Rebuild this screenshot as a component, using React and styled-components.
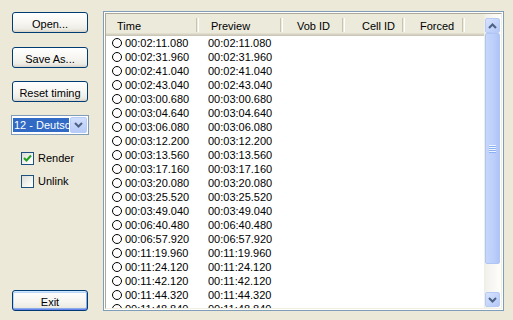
import React from "react"
import styled, { createGlobalStyle } from "styled-components"

const GlobalStyle = createGlobalStyle`
  html, body {
    margin: 0;
    padding: 0;
  }
  body {
    background: #ece9d8;
    font-family: "Liberation Sans", Arial, sans-serif;
    font-size: 11px;
    color: #000;
  }
`

const Window = styled.div`
  width: 513px;
  height: 320px;
  box-sizing: border-box;
  padding: 11px 9px 9px 11px;
  display: flex;
  gap: 14px;
  background: #ece9d8;
  overflow: hidden;
`

const Side = styled.div`
  width: 78px;
  display: flex;
  flex-direction: column;
`

const Button = styled.button`
  box-sizing: border-box;
  width: 76px;
  height: 21px;
  margin: ${p => p.$top || 0}px 0 0 1px;
  padding: 2px 0 0;
  font-family: inherit;
  font-size: 11px;
  color: #000;
  border: 1px solid #003c74;
  border-radius: 3px;
  background: linear-gradient(
    to bottom,
    #ffffff 0%,
    #f6f5f0 55%,
    #ecebe4 85%,
    #d8d2c6 100%
  );
  box-shadow: ${p =>
    p.$default
      ? "inset 0 1px 0 #cee7ff, inset 0 -1px 0 #6982ee, inset 1px 0 0 #bcd4f6, inset -1px 0 0 #89ade4, inset 0 2px 0 #bcd4f6, inset 0 -2px 0 #89ade4"
      : "none"};
  ${p => p.$default && "margin-top: auto;"}
`

const Combo = styled.div`
  box-sizing: border-box;
  width: 78px;
  height: 20px;
  margin-top: 13px;
  border: 1px solid #7f9db9;
  background: #fff;
  display: flex;
`

const ComboValue = styled.div`
  flex: 1;
  margin: 2px 1px 2px 1px;
  padding-left: 1px;
  background: #316ac5;
  color: #fff;
  line-height: 14px;
  white-space: nowrap;
  overflow: hidden;
`

const ComboButton = styled.div`
  box-sizing: border-box;
  width: 17px;
  margin: 1px 1px 1px 0;
  border: 1px solid #b9cbf7;
  border-radius: 2px;
  background: linear-gradient(to bottom, #d0defc, #b6cbf8);
  display: flex;
  align-items: center;
  justify-content: center;
`

const CheckRow = styled.label`
  display: flex;
  align-items: center;
  gap: 4px;
  height: 13px;
  margin-top: ${p => p.$top}px;
  padding-left: 10px;
  line-height: 13px;
`

const CheckBox = styled.span`
  box-sizing: border-box;
  width: 13px;
  height: 13px;
  border: 1px solid #1c5180;
  background: linear-gradient(135deg, #dcdcd7 0%, #f4f4f0 60%, #ffffff 100%);
  display: flex;
  align-items: center;
  justify-content: center;
`

const ListFrame = styled.div`
  flex: 1;
  box-sizing: border-box;
  border: 1px solid #7f9db9;
  padding: 1px;
  background: #fff;
  display: flex;
`

const ListInner = styled.div`
  flex: 1;
  border: 1px solid;
  border-color: #aca899 #f1efe2 #f1efe2 #aca899;
  display: flex;
  min-width: 0;
`

const Columns = styled.div`
  flex: 1;
  overflow: hidden;
  display: flex;
  flex-direction: column;
`

const Header = styled.div`
  height: 22px;
  flex-shrink: 0;
  box-sizing: border-box;
  padding-top: 2px;
  display: flex;
  background: linear-gradient(
    to bottom,
    #ebeadb 0,
    #ebeadb 19px,
    #e2decd 19px,
    #e2decd 20px,
    #d6d2c2 20px,
    #d6d2c2 21px,
    #cbc7b8 21px
  );
`

const HeadCell = styled.div`
  width: ${p => p.$w}px;
  flex-shrink: 0;
  display: flex;
  align-items: center;
`

const HeadLabel = styled.span`
  flex: 1;
  padding-left: ${p => p.$pad}px;
  white-space: nowrap;
`

const HeadSep = styled.span`
  width: 1px;
  height: 14px;
  margin-top: -2px;
  border-left: 1px solid #c7c5b2;
  border-right: 1px solid #fff;
`

const Row = styled.div`
  height: 14px;
  flex-shrink: 0;
  display: flex;
  line-height: 14px;
`

const Cell = styled.div`
  width: ${p => p.$w}px;
  flex-shrink: 0;
  box-sizing: border-box;
  padding-left: ${p => p.$pad}px;
  display: flex;
  align-items: center;
  gap: 2px;
  white-space: nowrap;
`

const Radio = styled.span`
  box-sizing: border-box;
  width: 10px;
  height: 10px;
  border: 1px solid #000;
  border-radius: 50%;
`

const ScrollBar = styled.div`
  width: 17px;
  flex-shrink: 0;
  display: flex;
  flex-direction: column;
  background: linear-gradient(to right, #eeede5 0, #f3f1ec 2px, #fefefb 100%);
`

const ScrollButton = styled.div`
  box-sizing: border-box;
  height: 15px;
  margin: ${p => (p.$up ? "4px 1px 0" : "0 1px 1px")};
  border: 1px solid #b7cbf6;
  border-radius: 2px;
  background: linear-gradient(135deg, #d7e3fd, #b4c8f7);
  display: flex;
  align-items: center;
  justify-content: center;
`

const Thumb = styled.div`
  box-sizing: border-box;
  height: ${p => p.$h}px;
  margin: 0 1px;
  border: 1px solid #b1c5f3;
  border-radius: 2px;
  background: linear-gradient(to right, #c6d6fc, #bccefa 60%, #b0c4f6);
  display: flex;
  flex-direction: column;
  align-items: center;
  justify-content: center;
`

const Grip = styled.span`
  width: 7px;
  height: 1px;
  margin: 0.5px 0;
  background: #eef4fe;
  box-shadow: 0 1px 0 #8cb0f8;
`

const Track = styled.div`
  flex: 1;
`

const Chevron = ({ up }) => (
  <svg width="9" height="6" viewBox="0 0 9 6">
    <path
      d={up ? "M1 5 L4.5 1.5 L8 5" : "M1 1 L4.5 4.5 L8 1"}
      fill="none"
      stroke="#4d6185"
      strokeWidth="2"
    />
  </svg>
)

const Check = () => (
  <svg width="9" height="9" viewBox="0 0 9 9">
    <path d="M1 4 L3.5 6.5 L8 1.5" fill="none" stroke="#21a121" strokeWidth="2" />
  </svg>
)

const columns = [
  { label: "Time", w: 93, pad: 11 },
  { label: "Preview", w: 84, pad: 12 },
  { label: "Vob ID", w: 62, pad: 14 },
  { label: "Cell ID", w: 60, pad: 17 },
  { label: "Forced", w: 60, pad: 15 },
]

const times = [
  "00:02:11.080",
  "00:02:31.960",
  "00:02:41.040",
  "00:02:43.040",
  "00:03:00.680",
  "00:03:04.640",
  "00:03:06.080",
  "00:03:12.200",
  "00:03:13.560",
  "00:03:17.160",
  "00:03:20.080",
  "00:03:25.520",
  "00:03:49.040",
  "00:06:40.480",
  "00:06:57.920",
  "00:11:19.960",
  "00:11:24.120",
  "00:11:42.120",
  "00:11:44.320",
  "00:11:48.840",
]

const App = () => (
  <>
    <GlobalStyle />
    <Window>
      <Side>
        <Button $top={1}>Open...</Button>
        <Button $top={14}>Save As...</Button>
        <Button $top={13}>Reset timing</Button>
        <Combo>
          <ComboValue>12 - Deutsch</ComboValue>
          <ComboButton>
            <Chevron />
          </ComboButton>
        </Combo>
        <CheckRow $top={17}>
          <CheckBox>
            <Check />
          </CheckBox>
          Render
        </CheckRow>
        <CheckRow $top={10}>
          <CheckBox />
          Unlink
        </CheckRow>
        <Button $default>Exit</Button>
      </Side>

      <ListFrame>
        <ListInner>
          <Columns>
            <Header>
              {columns.map(c => (
                <HeadCell key={c.label} $w={c.w}>
                  <HeadLabel $pad={c.pad}>{c.label}</HeadLabel>
                  <HeadSep />
                </HeadCell>
              ))}
            </Header>
            {times.map(t => (
              <Row key={t}>
                <Cell $w={93} $pad={6}>
                  <Radio />
                  <span style={{ marginLeft: 1 }}>{t}</span>
                </Cell>
                <Cell $w={84} $pad={9}>
                  {t}
                </Cell>
              </Row>
            ))}
          </Columns>
          <ScrollBar>
            <ScrollButton $up>
              <Chevron up />
            </ScrollButton>
            <Thumb $h={231}>
              <Grip />
              <Grip />
              <Grip />
              <Grip />
            </Thumb>
            <Track />
            <ScrollButton>
              <Chevron />
            </ScrollButton>
          </ScrollBar>
        </ListInner>
      </ListFrame>
    </Window>
  </>
)

export default App
